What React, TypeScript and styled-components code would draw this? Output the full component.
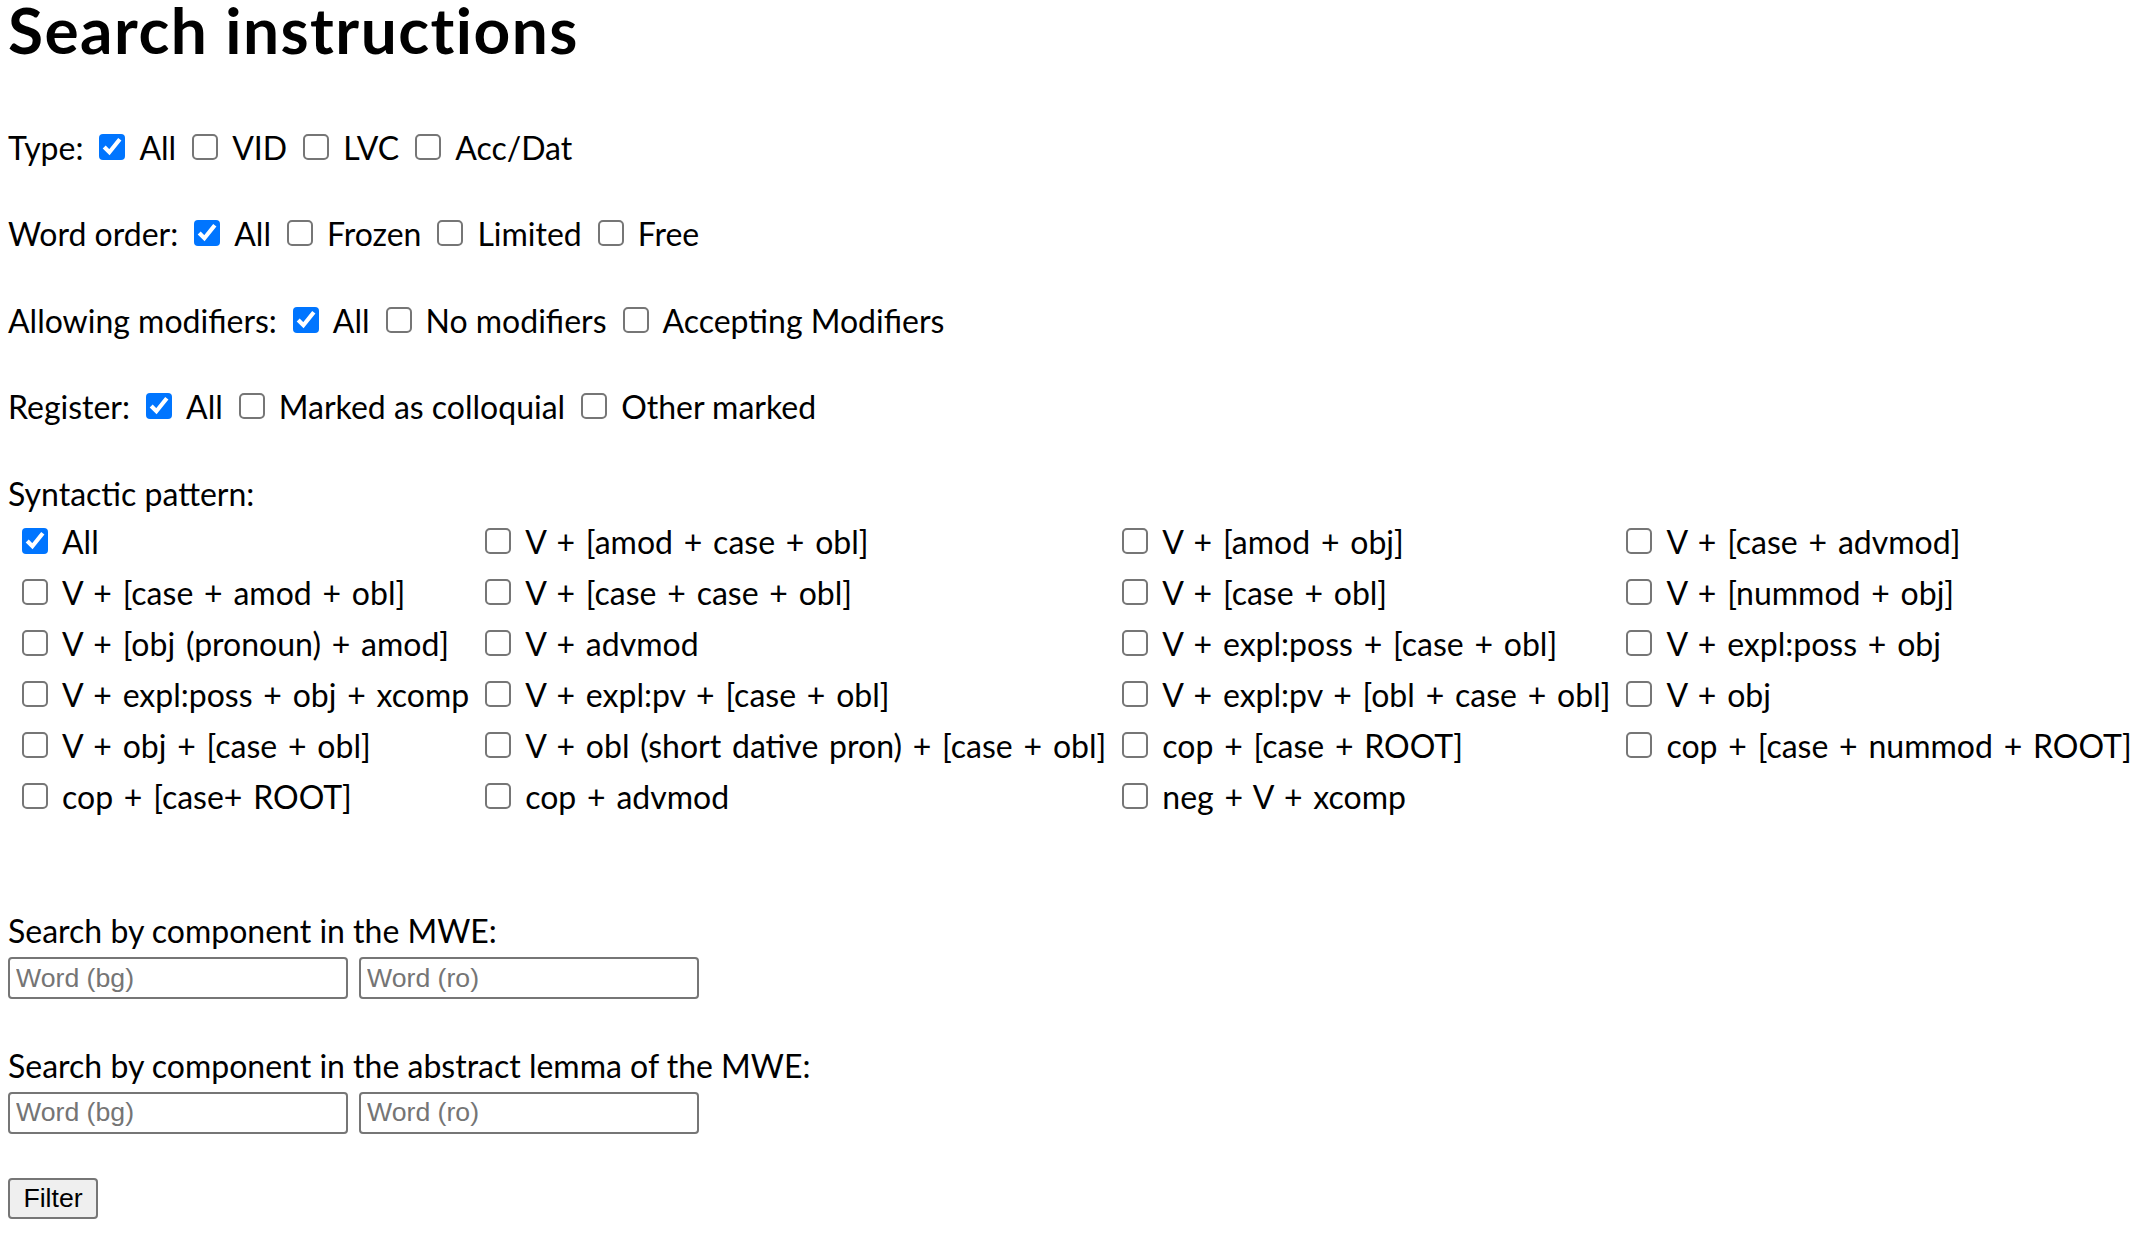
import React from "react";
import styled, { createGlobalStyle } from "styled-components";

const GlobalStyle = createGlobalStyle`
  html, body { margin: 0; padding: 0; background: #ffffff; }
  body {
    font-family: Lato, "Noto Sans", sans-serif;
    font-size: 32px;
    color: #000000;
  }
  input::placeholder { color: #757575; opacity: 1; }
`;

const Page = styled.main`
  display: flex;
  flex-direction: column;
  align-items: flex-start;
  padding: 0 8px;
`;

const Title = styled.h1`
  margin: 0;
  font-family: Lato, "Noto Sans", sans-serif;
  font-size: 64px;
  font-weight: 700;
  line-height: 60px;
  letter-spacing: 1.45px;
`;

const FilterRow = styled.div<{ $top: number }>`
  display: flex;
  align-items: baseline;
  margin-top: ${(p) => p.$top}px;
  line-height: 40px;
  white-space: nowrap;
`;

const RowLabel = styled.span`
  margin-right: 0;
`;

const Option = styled.label`
  margin-left: 16px;
`;

const Check = styled.input.attrs({ type: "checkbox" })`
  zoom: 2;
  width: 13px;
  height: 13px;
  margin: 0 7px 0 0;
  vertical-align: baseline;
`;

const SectionLabel = styled.div<{ $top?: number }>`
  margin-top: ${(p) => p.$top ?? 0}px;
  line-height: 40px;
  white-space: nowrap;
`;

const PatternGrid = styled.div`
  display: grid;
  grid-template-columns: repeat(4, max-content);
  gap: 4px;
  padding: 4px;
`;

const PatternCell = styled.label`
  padding: 2px 2px 2px 10px;
  line-height: 43px;
  white-space: nowrap;
  word-spacing: 2.6px;
`;

const InputRow = styled.div<{ $top: number }>`
  display: flex;
  gap: 11px;
  margin-top: ${(p) => p.$top}px;
`;

const WordInput = styled.input.attrs({ type: "text" })`
  box-sizing: border-box;
  width: 340px;
  height: 42px;
  padding: 2px 6px;
  border: 2px solid #767676;
  border-radius: 4px;
  font-family: "Liberation Sans", Arial, sans-serif;
  font-size: 26.67px;
  color: #000000;
  background: #ffffff;
  outline: none;
`;

const FilterButton = styled.button`
  box-sizing: border-box;
  margin-top: 44px;
  height: 41px;
  width: 90px;
  padding: 0 12px;
  border: 2px solid #767676;
  border-radius: 4px;
  background: #efefef;
  font-family: "Liberation Sans", Arial, sans-serif;
  font-size: 26.67px;
  color: #000000;
  line-height: 1;
`;

type Group = { label: string; options: string[]; top: number };

const groups: Group[] = [
  { label: "Type:", options: ["All", "VID", "LVC", "Acc/Dat"], top: 68 },
  { label: "Word order:", options: ["All", "Frozen", "Limited", "Free"], top: 46 },
  {
    label: "Allowing modifiers:",
    options: ["All", "No modifiers", "Accepting Modifiers"],
    top: 47,
  },
  {
    label: "Register:",
    options: ["All", "Marked as colloquial", "Other marked"],
    top: 46,
  },
];

const patterns: string[] = [
  "All",
  "V + [amod + case + obl]",
  "V + [amod + obj]",
  "V + [case + advmod]",
  "V + [case + amod + obl]",
  "V + [case + case + obl]",
  "V + [case + obl]",
  "V + [nummod + obj]",
  "V + [obj (pronoun) + amod]",
  "V + advmod",
  "V + expl:poss + [case + obl]",
  "V + expl:poss + obj",
  "V + expl:poss + obj + xcomp",
  "V + expl:pv + [case + obl]",
  "V + expl:pv + [obl + case + obl]",
  "V + obj",
  "V + obj + [case + obl]",
  "V + obl (short dative pron) + [case + obl]",
  "cop + [case + ROOT]",
  "cop + [case + nummod + ROOT]",
  "cop + [case+ ROOT]",
  "cop + advmod",
  "neg + V + xcomp",
];

export default function App() {
  return (
    <>
      <GlobalStyle />
      <Page>
        <Title>Search instructions</Title>
        {groups.map((g) => (
          <FilterRow key={g.label} $top={g.top}>
            <RowLabel>{g.label}</RowLabel>
            {g.options.map((o, i) => (
              <Option key={o}>
                <Check defaultChecked={i === 0} />
                {o}
              </Option>
            ))}
          </FilterRow>
        ))}
        <SectionLabel $top={46.5}>Syntactic pattern:</SectionLabel>
        <PatternGrid>
          {patterns.map((p, i) => (
            <PatternCell key={p}>
              <Check defaultChecked={i === 0} />
              {p}
            </PatternCell>
          ))}
        </PatternGrid>
        <SectionLabel $top={87.5}>Search by component in the MWE:</SectionLabel>
        <InputRow $top={6}>
          <WordInput placeholder="Word (bg)" />
          <WordInput placeholder="Word (ro)" />
        </InputRow>
        <SectionLabel $top={46.5}>
          Search by component in the abstract lemma of the MWE:
        </SectionLabel>
        <InputRow $top={6}>
          <WordInput placeholder="Word (bg)" />
          <WordInput placeholder="Word (ro)" />
        </InputRow>
        <FilterButton type="button">Filter</FilterButton>
      </Page>
    </>
  );
}
